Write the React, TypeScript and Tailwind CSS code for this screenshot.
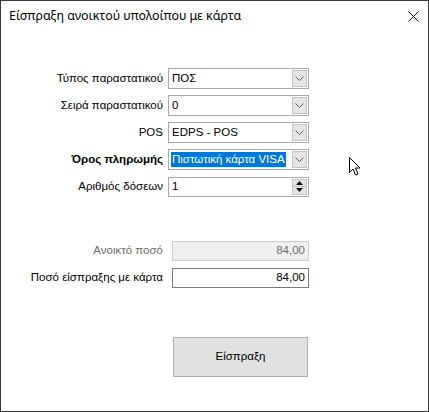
import React from "react";

const ComboBox = ({ value, selected }: { value: string; selected?: boolean }) => (
  <div className="flex h-[21px] w-[141px] items-stretch border border-[#a9a9a9] bg-white">
    <div className="flex flex-1 items-center pl-[2px] min-w-0">
      <span
        className={
          selected
            ? "bg-[#0078d7] text-white px-[1px] leading-[15px] truncate"
            : "px-[1px] leading-[15px] truncate"
        }
      >
        {value}
      </span>
    </div>
    <div className="my-[1px] mr-[1px] flex w-[15px] items-center justify-center border border-[#c4c4c4] bg-[#e5e5e5]">
      <svg width="9" height="5" viewBox="0 0 9 5">
        <path d="M0.5 0.5 L4.5 4.5 L8.5 0.5" fill="none" stroke="#606060" strokeWidth="1" />
      </svg>
    </div>
  </div>
);

const Row = ({
  label,
  bold,
  muted,
  wide,
  children,
}: {
  label: string;
  bold?: boolean;
  muted?: boolean;
  wide?: boolean;
  children: React.ReactNode;
}) => (
  <div className="flex h-[21px] items-center">
    <div
      className={
        "w-[163px] pr-[1px] text-right whitespace-nowrap " +
        (bold ? "font-bold " : "") +
        (muted ? "text-[#6d6d6d]" : "text-black")
      }
    >
      {label}
    </div>
    <div className={wide ? "ml-[8px]" : "ml-[4px]"}>{children}</div>
  </div>
);

export default function App() {
  return (
    <div
      className="relative flex h-[412px] w-[429px] flex-col border border-[#3a3a3a] bg-white text-[11.5px] text-black"
      style={{ fontFamily: '"Liberation Sans", Arial, sans-serif' }}
    >
      {/* title bar */}
      <div className="flex h-[30px] items-center justify-between pl-[8px] pr-[9px]">
        <span
          className="text-[12.4px] text-black"
          style={{ fontFamily: '"Noto Sans", "Open Sans", sans-serif' }}
        >
          Είσπραξη ανοικτού υπολοίπου με κάρτα
        </span>
        <svg width="11" height="11" viewBox="0 0 11 11">
          <path d="M0.5 0.5 L10.5 10.5 M10.5 0.5 L0.5 10.5" stroke="#111" strokeWidth="1" />
        </svg>
      </div>

      <div className="flex flex-col pt-[37px]">
        <div className="flex flex-col gap-[6px]">
          <Row label="Τύπος παραστατικού">
            <ComboBox value="ΠΟΣ" />
          </Row>
          <Row label="Σειρά παραστατικού">
            <ComboBox value="0" />
          </Row>
          <Row label="POS">
            <ComboBox value="EDPS - POS" />
          </Row>
          <Row label="Όρος πληρωμής" bold>
            <ComboBox value="Πιστωτική κάρτα VISA" selected />
          </Row>
          <Row label="Αριθμός δόσεων">
            <div className="flex h-[20px] w-[141px] items-stretch border border-[#a9a9a9] bg-white">
              <div className="flex flex-1 items-center pl-[3px]">1</div>
              <div className="my-[1px] mr-[1px] flex w-[15px] flex-col">
                <div className="flex flex-1 items-center justify-center border border-[#c4c4c4] bg-[#e5e5e5]">
                  <svg width="7" height="4" viewBox="0 0 7 4">
                    <path d="M0 4 L3.5 0 L7 4 Z" fill="#111" />
                  </svg>
                </div>
                <div className="flex flex-1 items-center justify-center border border-t-0 border-[#c4c4c4] bg-[#e5e5e5]">
                  <svg width="7" height="4" viewBox="0 0 7 4">
                    <path d="M0 0 L7 0 L3.5 4 Z" fill="#111" />
                  </svg>
                </div>
              </div>
            </div>
          </Row>
        </div>

        <div className="mt-[43px] flex flex-col gap-[6px]">
          <Row label="Ανοικτό ποσό" muted wide>
            <div className="flex h-[20px] w-[137px] items-center justify-end border border-[#cccccc] bg-[#f0f0f0] pr-[3px] text-[#6d6d6d]">
              84,00
            </div>
          </Row>
          <Row label="Ποσό είσπραξης με κάρτα" wide>
            <div className="flex h-[20px] w-[137px] items-center justify-end border border-[#7a7a7a] bg-white pr-[3px]">
              84,00
            </div>
          </Row>
        </div>

        <div className="ml-[172px] mt-[49px]">
          <div className="flex h-[40px] w-[135px] items-center justify-center border border-[#adadad] bg-[#e1e1e1]">
            Είσπραξη
          </div>
        </div>
      </div>

      {/* mouse pointer */}
      <svg
        className="absolute left-[347px] top-[155px]"
        width="13"
        height="21"
        viewBox="0 0 13 21"
      >
        <path
          d="M1.5 1.5 L1.5 16.5 L5 13 L7.5 19 L10 18 L7.5 12 L12 12 Z"
          fill="#fff"
          stroke="#000"
          strokeWidth="1"
          strokeLinejoin="miter"
        />
      </svg>
    </div>
  );
}
